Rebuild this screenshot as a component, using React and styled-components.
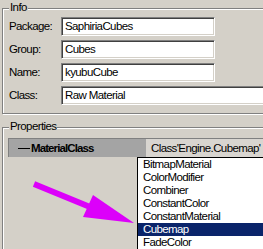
import React from 'react';
import styled, {createGlobalStyle} from 'styled-components';

const GlobalStyle = createGlobalStyle`
  html, body {
    margin: 0;
    padding: 0;
    background: #d4d0c8;
    overflow: hidden;
  }
  body {
    font-family: 'Liberation Sans', Arial, sans-serif;
    font-size: 11.5px;
    letter-spacing: -0.6px;
    color: #000;
  }
`;

const Page = styled.div`
  position: relative;
  width: 263px;
  height: 249px;
  overflow: hidden;
  padding-top: 8px;
  box-sizing: border-box;
`;

const Group = styled.div`
  position: relative;
  margin: ${props => props.top || 0}px 0 0 2px;
  width: 320px;
  height: ${props => props.height}px;
  box-sizing: border-box;
  border: 1px solid #808080;
  box-shadow: inset 1px 1px #fff, 1px 1px #fff;
  padding: ${props => props.padTop}px 0 0 ${props => props.padLeft}px;
`;

const Legend = styled.span`
  position: absolute;
  left: 6px;
  top: -9px;
  line-height: 14px;
  padding: 0 1px;
  background: #d4d0c8;
`;

const FieldGrid = styled.div`
  display: grid;
  grid-template-columns: 52px auto;
  row-gap: 4px;
  padding-left: 6px;
  align-items: center;
`;

const Label = styled.div`
  line-height: 19px;
`;

const TextBox = styled.div`
  width: ${props => (props.wide ? 400 : 154)}px;
  height: 19px;
  box-sizing: border-box;
  background: #fff;
  border-top: 1px solid #808080;
  border-left: 1px solid #808080;
  border-bottom: 1px solid #fff;
  border-right: 1px solid #fff;
  box-shadow: inset 1px 1px #404040, inset -1px -1px #d4d0c8;
  padding: 0 3px;
  line-height: 17px;
  white-space: nowrap;
  overflow: hidden;
`;

const PropRow = styled.div`
  display: flex;
  height: 19px;
  width: 400px;
  box-sizing: border-box;
  border-top: 1px solid #808080;
  border-left: 1px solid #808080;
  box-shadow: inset 1px 1px #404040;
`;

const PropName = styled.div`
  display: flex;
  align-items: center;
  width: 128px;
  background: #a4a4a4;
  padding-left: 9px;
  font-weight: bold;
  letter-spacing: -0.9px;
`;

const Dash = styled.span`
  display: inline-block;
  width: 12px;
  height: 1px;
  background: #000;
  margin-right: 1px;
`;

const PropValue = styled.div`
  flex: 1;
  background: #d8d5d0;
  padding-left: 5px;
  line-height: 18px;
  white-space: nowrap;
`;

const DropList = styled.div`
  position: absolute;
  left: 134px;
  top: 29px;
  width: 300px;
  background: #fff;
  border: 1px solid #000;
`;

const Item = styled.div`
  height: 13px;
  line-height: 13px;
  padding-left: 5px;
  white-space: nowrap;
  background: ${props => (props.selected ? '#0a246a' : 'transparent')};
  color: ${props => (props.selected ? '#fff' : '#000')};
`;

const Overlay = styled.svg`
  position: absolute;
  left: 0;
  top: 0;
  pointer-events: none;
`;

const fields = [
  {label: 'Package:', value: 'SaphiriaCubes'},
  {label: 'Group:', value: 'Cubes'},
  {label: 'Name:', value: 'kyubuCube'},
  {label: 'Class:', value: 'Raw Material', wide: true},
];

const classes = [
  'BitmapMaterial',
  'ColorModifier',
  'Combiner',
  'ConstantColor',
  'ConstantMaterial',
  'Cubemap',
  'FadeColor',
];

export default function App() {
  return (
    <Page>
      <GlobalStyle />
      <Group height={106} padTop={8} padLeft={0}>
        <Legend>Info</Legend>
        <FieldGrid>
          {fields.map(f => (
            <React.Fragment key={f.label}>
              <Label>{f.label}</Label>
              <TextBox wide={f.wide}>{f.value}</TextBox>
            </React.Fragment>
          ))}
        </FieldGrid>
      </Group>
      <Group top={13} height={200} padTop={10} padLeft={5}>
        <Legend>Properties</Legend>
        <PropRow>
          <PropName>
            <Dash />
            MaterialClass
          </PropName>
          <PropValue>Class'Engine.Cubemap'</PropValue>
        </PropRow>
        <DropList>
          {classes.map(c => (
            <Item key={c} selected={c === 'Cubemap'}>
              {c}
            </Item>
          ))}
        </DropList>
      </Group>
      <Overlay width="263" height="249" viewBox="0 0 263 249">
        <line x1="34" y1="184" x2="90" y2="207" stroke="#dc00fa" strokeWidth="6" />
        <polygon points="93,195 83,217 134,223" fill="#dc00fa" />
      </Overlay>
    </Page>
  );
}
